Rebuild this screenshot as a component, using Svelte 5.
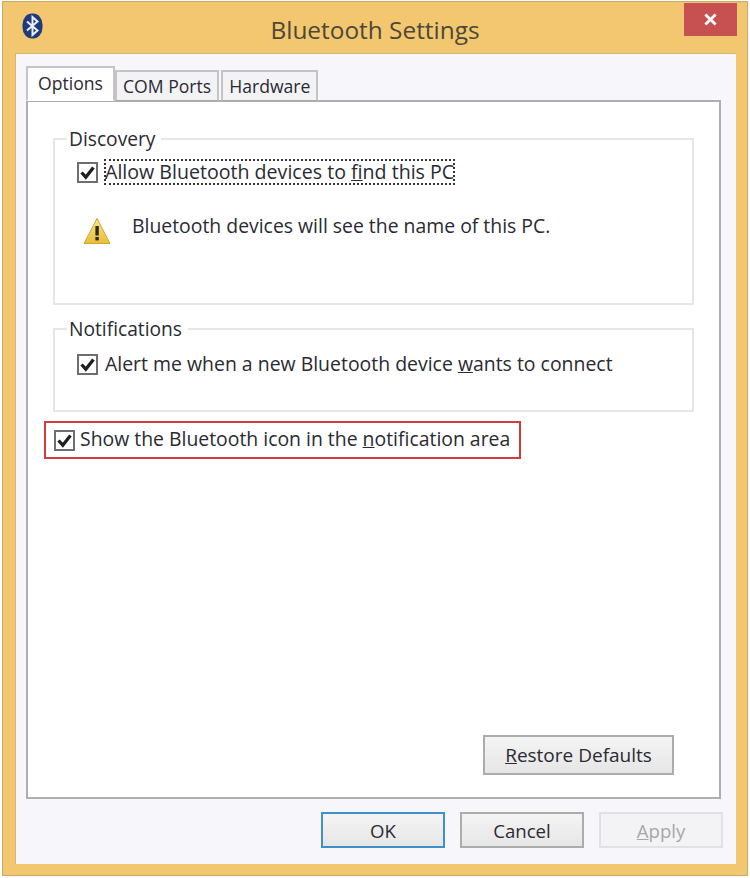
<script>
	let tabs = [
		{ name: "Options", active: true },
		{ name: "COM Ports", active: false },
		{ name: "Hardware", active: false }
	];
</script>

{#snippet check()}
	<span class="box">
		<svg viewBox="0 0 20 20" width="17" height="17">
			<path d="M3 10 L8 15.5 L17 4" fill="none" stroke="#1d1d22" stroke-width="3.8" />
		</svg>
	</span>
{/snippet}

<div class="window">
	<header class="titlebar">
		<div class="left">
			<svg class="bt" viewBox="0 0 21 26" width="21" height="26">
				<rect x="0.5" y="0.5" width="20" height="25" rx="9.5" ry="11" fill="#1f3a7d" />
				<path d="M5 8.5 L15.5 17.5 L10.5 22 V4 L15.5 8.5 L5 17.5" fill="none" stroke="#e8eef8" stroke-width="2" />
			</svg>
		</div>
		<h1>Bluetooth Settings</h1>
		<div class="right">
			<button class="close" aria-label="Close">
				<svg viewBox="0 0 14 14" width="13" height="13">
					<path d="M1.5 1.5 L12.5 12.5 M12.5 1.5 L1.5 12.5" stroke="#fff" stroke-width="3" />
				</svg>
			</button>
		</div>
	</header>

	<div class="client">
		<nav class="tabs">
			{#each tabs as tab}
				<div class="tab" class:active={tab.active}>{tab.name}</div>
			{/each}
		</nav>

		<section class="panel">
			<fieldset class="discovery">
				<legend>Discovery</legend>
				<div class="row first">
					{@render check()}
					<span class="focus">Allow Bluetooth devices to <u>f</u>ind this PC</span>
				</div>
				<div class="warning">
					<svg viewBox="0 0 28 28" width="28" height="28">
						<defs>
							<linearGradient id="warn" x1="0" y1="0" x2="0" y2="1">
								<stop offset="0" stop-color="#f8e68c" />
								<stop offset="1" stop-color="#e9bd3a" />
							</linearGradient>
						</defs>
						<path d="M14 1.5 L27 26.5 H1 Z" fill="url(#warn)" stroke="#d0a62e" stroke-width="1" stroke-linejoin="round" />
						<rect x="12.4" y="9" width="3.4" height="9.5" fill="#2a2a20" />
						<rect x="12.4" y="20" width="3.4" height="3.4" fill="#2a2a20" />
					</svg>
					<span>Bluetooth devices will see the name of this PC.</span>
				</div>
			</fieldset>

			<fieldset class="notifications">
				<legend>Notifications</legend>
				<div class="row second">
					{@render check()}
					<span class="plain">Alert me when a new Bluetooth device <u>w</u>ants to connect</span>
				</div>
			</fieldset>

			<div class="highlight">
				{@render check()}
				<span>Show the Bluetooth icon in the <u>n</u>otification area</span>
			</div>

			<div class="restore">
				<button class="btn wide"><u>R</u>estore Defaults</button>
			</div>
		</section>

		<footer class="actions">
			<button class="btn default">OK</button>
			<button class="btn">Cancel</button>
			<button class="btn disabled"><u>A</u>pply</button>
		</footer>
	</div>
</div>

<style>
	:global(body) {
		background: #fff;
	}
	.window {
		box-sizing: border-box;
		width: 746px;
		height: 875px;
		margin: 1px 0 0 2px;
		border: 1px solid #c8ab68;
		background: #f2c76f;
		font-family: "Open Sans", "Noto Sans", sans-serif;
		font-size: 19.4px;
		color: #2a2a33;
		display: flex;
		flex-direction: column;
	}
	.titlebar {
		height: 51px;
		flex: none;
		display: grid;
		grid-template-columns: 1fr auto 1fr;
	}
	.left {
		padding: 11px 0 0 19px;
	}
	.bt {
		display: block;
	}
	h1 {
		margin: 0;
		padding-top: 12px;
		font-size: 24.4px;
		font-weight: 400;
		line-height: 32px;
		color: #4d4838;
	}
	.right {
		display: flex;
		justify-content: flex-end;
		padding: 1px 10px 0 0;
		align-items: flex-start;
	}
	.close {
		width: 53px;
		height: 33px;
		padding: 0;
		border: none;
		background: #c75050;
		display: flex;
		align-items: center;
		justify-content: center;
	}
	.client {
		flex: 1;
		margin: 0 11px 11px 12px;
		padding: 13px 14px 0 10px;
		background: #f7f7fb;
		border: 1px solid #d2b673;
		border-width: 1px 0 0 1px;
		display: flex;
		flex-direction: column;
	}
	.tabs {
		display: flex;
		align-items: flex-end;
		height: 34px;
		flex: none;
		position: relative;
		z-index: 1;
		margin-bottom: -1px;
	}
	.tab {
		box-sizing: border-box;
		height: 31px;
		padding: 0 6px;
		line-height: 28px;
		font-size: 17.6px;
		border: 2px solid #c4c4c8;
		border-bottom: 1px solid #a9a9a9;
		background: #f3f3f6;
		margin-left: 2px;
	}
	.tab.active {
		height: 35px;
		margin: 0;
		width: 89px;
		padding: 0 0 0 10px;
		background: #fff;
		border-bottom-color: #fff;
		line-height: 30px;
	}
	.tab.active + .tab {
		margin-left: 0;
	}
	.panel {
		box-sizing: border-box;
		height: 699px;
		flex: none;
		width: 695px;
		background: #fff;
		border: 2px solid #aeaeb2;
		padding: 25px 25px 0 25px;
		display: flex;
		flex-direction: column;
	}
	fieldset {
		box-sizing: border-box;
		margin: 0;
		min-width: 0;
		border: 2px solid #e6e6e8;
		padding: 0 0 0 22px;
	}
	legend {
		margin-left: -10px;
		padding: 0 6px 0 2px;
		line-height: 24px;
		font-size: 19.2px;
	}
	.discovery {
		height: 178px;
	}
	.notifications {
		height: 95px;
		margin-top: 12px;
	}
	.row {
		display: flex;
		align-items: center;
		gap: 7px;
	}
	.row.first {
		margin-top: 8px;
		gap: 6px;
		font-size: 19.6px;
	}
	.row.second {
		margin-top: 10px;
		font-size: 19.45px;
	}
	.box {
		box-sizing: border-box;
		width: 21px;
		height: 21px;
		flex: none;
		border: 2px solid #6e6e6e;
		background: #fff;
		display: flex;
		align-items: center;
		justify-content: center;
	}
	.focus {
		outline: 2px dotted #333;
		outline-offset: -2px;
		line-height: 26px;
		padding: 0 1px 0 1px;
		white-space: nowrap;
	}
	.plain {
		line-height: 26px;
	}
	.warning {
		display: flex;
		gap: 21px;
		margin: 28px 0 0 6px;
		line-height: 26px;
	}
	.warning svg {
		display: block;
		margin-top: 4px;
	}
	.highlight {
		box-sizing: border-box;
		align-self: flex-start;
		width: 477px;
		height: 38px;
		margin: 9px 0 0 -9px;
		border: 2px solid #d23b3f;
		padding: 0 0 0 8px;
		display: flex;
		align-items: center;
		gap: 5px;
		white-space: nowrap;
	}
	.highlight span:last-child {
		margin-top: -4px;
	}
	.restore {
		margin-top: auto;
		display: flex;
		justify-content: flex-end;
		padding-bottom: 22px;
		padding-right: 20px;
	}
	.btn {
		box-sizing: border-box;
		width: 124px;
		height: 36px;
		padding: 0 0 0 0;
		border: 2px solid #acacac;
		background: linear-gradient(#f4f4f4, #e6e6e6);
		font: inherit;
		font-size: 18.6px;
		color: inherit;
	}
	.btn.wide {
		width: 191px;
		height: 40px;
		font-size: 19px;
	}
	.btn.default {
		border-color: #3f8fcb;
	}
	.btn.disabled {
		border-color: #e2e2e4;
		background: #f3f3f5;
		color: #a6a6a6;
	}
	.actions {
		display: flex;
		justify-content: flex-end;
		gap: 15px;
		margin: 13px 0 0;
		margin-right: -1px;
	}
</style>
